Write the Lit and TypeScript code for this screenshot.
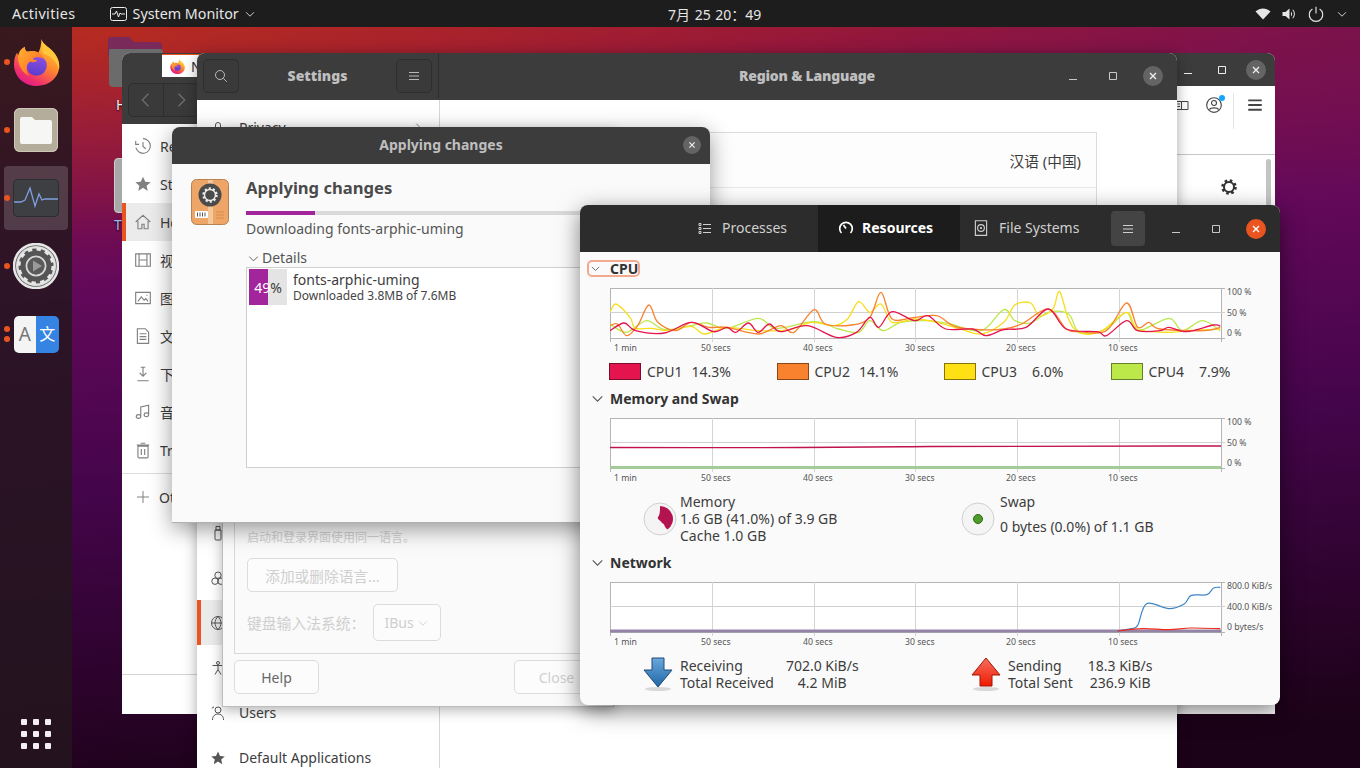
import { LitElement, html, svg, css } from "lit";
import { customElement } from "lit/decorators.js";

// points are read off the reference crop, x in 2.24x and y in 3x
type Pt = [number, number];
const CPU3: Pt[] = [[68,320],[80,295],[100,315],[115,340],[125,368],[160,368],[200,375],[250,362],[280,385],[330,365],[400,375],[470,372],[520,350],[570,360],[600,340],[625,288],[650,320],[675,295],[700,350],[750,340],[800,350],[850,368],[900,385],[950,350],[975,298],[1010,292],[1030,330],[1060,310],[1075,258],[1095,340],[1120,382],[1170,375],[1225,320],[1250,370],[1320,380],[1360,375],[1435,370]];
const CPU2: Pt[] = [[68,360],[85,355],[105,390],[130,360],[155,298],[175,350],[215,375],[250,350],[290,365],[330,365],[400,385],[450,360],[480,380],[525,312],[550,355],[610,358],[650,335],[675,260],[700,340],[750,335],[800,330],[840,362],[900,372],[950,370],[990,355],[1050,310],[1090,370],[1120,378],[1180,375],[1225,292],[1250,365],[1275,350],[1300,370],[1400,375],[1435,365]];
const CPU1: Pt[] = [[68,375],[100,352],[125,375],[190,382],[250,350],[300,378],[330,365],[350,380],[378,352],[400,380],[425,355],[450,378],[510,360],[575,395],[620,380],[650,335],[670,365],[700,318],[750,345],[780,330],[820,370],[880,370],[910,390],[950,372],[1000,365],[1050,310],[1090,370],[1160,378],[1180,390],[1225,345],[1250,375],[1300,375],[1320,365],[1360,378],[1420,358],[1435,362]];
const CPU4: Pt[] = [[68,355],[105,380],[150,345],[190,372],[250,360],[285,352],[330,368],[400,338],[440,368],[525,348],[580,370],[625,380],[650,345],[680,375],[720,350],[780,345],[830,355],[900,375],[950,312],[975,345],[1010,352],[1050,320],[1095,325],[1120,380],[1180,370],[1225,320],[1250,375],[1320,338],[1350,375],[1395,345],[1435,375]];
const NET_IN: Pt[] = [[1205,257],[1235,250],[1250,240],[1270,175],[1320,190],[1355,175],[1370,150],[1405,148],[1420,128],[1435,126]];
const NET_OUT: Pt[] = [[1205,257],[1260,250],[1320,253],[1370,248],[1435,250]];

function smooth(pts: Pt[], top: number) {
  const p = pts.map(([x, y]) => [(x - 68) / 2.24, (y - top) / 3]);
  let d = `M${p[0][0]} ${p[0][1]}`;
  for (let i = 0; i < p.length - 1; i++) {
    const a = p[Math.max(i - 1, 0)], b = p[i], c = p[i + 1], e = p[Math.min(i + 2, p.length - 1)];
    d += ` C${b[0] + (c[0] - a[0]) / 6} ${b[1] + (c[1] - a[1]) / 6} ${c[0] - (e[0] - b[0]) / 6} ${c[1] - (e[1] - b[1]) / 6} ${c[0]} ${c[1]}`;
  }
  return d;
}

const TIMES: [string, number][] = [["1 min", 4], ["50 secs", 91], ["40 secs", 193], ["30 secs", 295], ["20 secs", 396], ["10 secs", 498]];

function chart(labels: string[], series: unknown) {
  return html`<svg class="chart" width="670" height="70" viewBox="0 0 670 70">
    <rect x="0.5" y="0.5" width="611" height="50" fill="#fff" stroke="#b4b4b4"/>
    ${[102.5, 204.5, 305.5, 407.5, 509.5].map((x) => svg`<line x1=${x} x2=${x} y1="0" y2="54" stroke="#d4d4d4"/>`)}
    <line x1="0" x2="615" y1="24.5" y2="24.5" stroke="#d0d0d0"/>
    <line x1="0.5" x2="0.5" y1="50" y2="54" stroke="#b4b4b4"/>
    <line x1="611.5" x2="611.5" y1="50" y2="54" stroke="#b4b4b4"/>
    <line x1="611" x2="615" y1="0.5" y2="0.5" stroke="#b4b4b4"/>
    <line x1="611" x2="615" y1="50.5" y2="50.5" stroke="#b4b4b4"/>
    ${series}
    ${TIMES.map(([t, x]) => svg`<text class="axis" x=${x} y="63">${t}</text>`)}
    ${labels.map((t, i) => svg`<text class="axis" x="617" y=${7 + i * 20.5}>${t}</text>`)}
  </svg>`;
}

const stroke = (d: string, size = 16, vb = 16) => html`<svg class="ic" width=${size} height=${size} viewBox="0 0 ${vb} ${vb}" fill="none" stroke="currentColor" stroke-width="1"><path d=${d}/></svg>`;
const fill = (d: string, size = 16, vb = 16) => html`<svg class="ic" width=${size} height=${size} viewBox="0 0 ${vb} ${vb}" fill="currentColor"><path d=${d}/></svg>`;

const CHEV = "M3.5 6l4.5 4.5L12.5 6";
const MENU = "M3 4.5h10M3 8h10M3 11.5h10";
const STAR = "M8 1.5l2 4.4 4.8.5-3.6 3.2 1 4.7L8 11.4l-4.2 2.9 1-4.7L1.2 6.4 6 5.9z";

function controls(close = "dim") {
  return html`<div class="controls">
    <span class="ctl">${stroke("M4 11.5h8", 16)}</span>
    <span class="ctl">${stroke("M4.5 4.5h7v7h-7z", 16)}</span>
    <span class="ctl"><span class="close ${close}">${stroke("M5 5l6 6M11 5l-6 6", 16)}</span></span>
  </div>`;
}

function firefoxIcon(size: number) {
  return html`<svg width=${size} height=${size} viewBox="0 0 48 48">
    <defs>
      <linearGradient id="ff1" x1="0.8" y1="0" x2="0.2" y2="1"><stop offset="0" stop-color="#ffd43b"/><stop offset="0.45" stop-color="#ff8a2d"/><stop offset="0.8" stop-color="#f0306a"/><stop offset="1" stop-color="#d9169a"/></linearGradient>
      <linearGradient id="ff2" x1="0.6" y1="0" x2="0.4" y2="1"><stop offset="0" stop-color="#8f50e8"/><stop offset="1" stop-color="#5b3bc8"/></linearGradient>
      <linearGradient id="ff3" x1="0" y1="0" x2="1" y2="1"><stop offset="0" stop-color="#ffb52e"/><stop offset="1" stop-color="#ff5a28"/></linearGradient>
    </defs>
    <path fill="url(#ff1)" d="M29 0c1 5 6 7 11 12 6 6 8 13 7 19-2 10-11 17-23 17C11 48 1 38 1 26c0-5 1-9 3-12l2 4c1-5 3-8 6-10 0 3 1 5 3 5 4-1 8 0 11 1 2-4 3-9 3-14z"/>
    <circle cx="24" cy="27" r="10.5" fill="url(#ff2)"/>
    <path fill="url(#ff3)" d="M5 18c1-5 3-8 7-10 0 3 1 5 3 5 7-2 14 0 17 8-2-2-5-3-9-2-2 0-3 1-2 2l4 1c-2 2-5 2-7 1-3 1-4 4-4 7 0 3 1 6 3 8-7-3-12-11-12-20z"/>
    <path fill="#ffc83a" d="M29 0c1 5 6 7 11 12 6 6 8 13 7 19-2-7-6-12-13-15-3-1-4-2-4-4 0-4 0-8-1-12z"/>
  </svg>`;
}

const gearDash = (r: number, w: number, color: string, n = 12) => {
  const c = 2 * Math.PI * r;
  return svg`<circle cx="0" cy="0" r=${r} fill="none" stroke=${color} stroke-width=${w} stroke-dasharray="${c / n / 2} ${c / n / 2}"/>`;
};

function settingsIcon() {
  return html`<svg width="46" height="46" viewBox="-23 -23 46 46">
    <circle r="22" fill="#5a5a5a" stroke="#e6e6e6" stroke-width="2.5"/>
    <circle r="20" fill="#e8e8e8" opacity=".95"/>
    <circle r="17.5" fill="#555"/>
    ${gearDash(17, 3, "#e8e8e8")}
    <circle r="9.5" fill="none" stroke="#d6d6d6" stroke-width="2"/>
    <circle r="8.5" fill="#5a5a5a"/>
    <path fill="#9a9a9a" d="M-3-5.5L6 0l-9 5.5z"/>
  </svg>`;
}

function packageIcon() {
  return html`<svg width="38" height="46" viewBox="0 0 38 46">
    <rect x="0.5" y="0.5" width="37" height="45" rx="5" fill="#eda568" stroke="#b98252"/>
    <rect x="17" y="1" width="5" height="44" fill="#f4c79a"/>
    <circle cx="19" cy="16" r="11.5" fill="#4b4b4b"/>
    <g transform="translate(19 16)">${gearDash(6.5, 2.4, "#ededed", 10)}<circle r="5.5" fill="none" stroke="#ededed" stroke-width="1.4"/></g>
    <rect x="4" y="32" width="13" height="7" rx="1" fill="#fff"/>
    <path d="M6.5 33.5v4M9 33.5v4M11.5 33.5v4M14 33.5v4" stroke="#555" stroke-width="1"/>
    <path d="M25 33h8M25 36h8M25 39h8" stroke="#d68d4e" stroke-width="1"/>
  </svg>`;
}

function arrow(up: boolean) {
  const id = up ? "arrUp" : "arrDown";
  const pts = up ? "15,2 29,19 21,19 21,30 9,30 9,19 1,19" : "9,2 21,2 21,14 29,14 15,31 1,14 9,14";
  return html`<svg width="30" height="36" viewBox="0 0 30 36">
    <defs><linearGradient id=${id} x1="0" y1="0" x2="0" y2="1">
      <stop offset="0" stop-color=${up ? "#f77060" : "#6aa8dc"}/><stop offset="1" stop-color=${up ? "#ee1a00" : "#1f66a6"}/>
    </linearGradient></defs>
    <ellipse cx="15" cy="33" rx="13" ry="2" fill="#d8d8d8"/>
    <polygon points=${pts} fill="url(#${id})" stroke=${up ? "#a51200" : "#204a78"}/>
  </svg>`;
}

const SIDE = ["Privacy", "Online Accounts", "Sharing", "Sound", "Power", "Displays", "Mouse & Touchpad", "Keyboard Shortcuts", "Printers", "Removable Media", "Color", "Region & Language", "Universal Access", "Users", "Default Applications"];
const SIDE_ICON: Record<string, string> = {
  Privacy: "M4 8h8v6H4zM5.5 8V5a2.5 2.5 0 015 0v3",
  "Removable Media": "M5 5h6v9a1 1 0 01-1 1H6a1 1 0 01-1-1zM6 1.5h4V5H6z",
  Color: "M8 2a3.2 3.2 0 100 6.4A3.2 3.2 0 008 2zM5 8a3.2 3.2 0 100 6.4A3.2 3.2 0 005 8zM11 8a3.2 3.2 0 100 6.4A3.2 3.2 0 0011 8z",
  "Region & Language": "M8 1.5a6.5 6.5 0 100 13 6.5 6.5 0 000-13zM1.5 8h13M8 1.5c-4 4-4 9 0 13M8 1.5c4 4 4 9 0 13",
  "Universal Access": "M8 1.5a1.5 1.5 0 100 3 1.5 1.5 0 000-3zM2.5 5.5h11M8 5.5v4M8 9.5l-3 5M8 9.5l3 5",
  Users: "M8 2a3 3 0 100 6 3 3 0 000-6zM2.5 15c0-4 2.5-6 5.5-6s5.5 2 5.5 6M2 3.5a2 2 0 012-1.5",
};

const FILES: [string, string][] = [
  ["Recent", "M8 1.5a6.5 6.5 0 11-6.3 8M8 4.5V8.5l2.5 2M1.5 3.5v3h3"],
  ["Starred", ""],
  ["Home", "M1.5 8L8 2l6.5 6M3.5 7v7h3.5v-4h2v4h3.5V7"],
  ["视频", "M1.5 2.5h13v11h-13zM4.5 2.5v11M11.5 2.5v11M4.5 8h7"],
  ["图片", "M1.5 3h13v10h-13zM3.5 11l3-4 2.5 3 1.5-1.5 2 2.5M11 5.5h1"],
  ["文档", "M3 1.5h7l3 3v10H3zM5 6h6M5 8.5h6M5 11h6"],
  ["下载", "M8 2v8M5 7l3 3 3-3M6 2h4M3 14h10"],
  ["音乐", "M6 12V3.5l7-1.5v8.5M6 12a2 1.7 0 11-4 0 2 1.7 0 014 0zM13 10.5a2 1.7 0 11-4 0 2 1.7 0 014 0z"],
  ["Trash", "M3.5 4.5h9V14a1 1 0 01-1 1h-7a1 1 0 01-1-1zM2.5 3.5h11M6 2h4M6.5 7v5.5M9.5 7v5.5"],
];

@customElement("app-root")
export class AppRoot extends LitElement {
  static styles = css`
    :host {
      display: block;
      position: relative;
      width: 1360px;
      height: 768px;
      overflow: hidden;
      font-family: "Noto Sans", "Noto Sans CJK SC", sans-serif;
      font-size: 14px;
      color: #3d3d3d;
      background:
        radial-gradient(560px 220px at 1360px 40px, rgba(100, 15, 90, 0.45), transparent),
        radial-gradient(700px 220px at 90px 20px, rgba(200, 60, 20, 0.45), transparent),
        linear-gradient(176deg, #a81e2a 4%, #8f1540 14%, #62085a 34%, #44054a 58%, #1c0218 94%);
    }
    .ic { display: block; flex: none; }

    /* top bar */
    .top {
      position: relative;
      z-index: 20;
      height: 27px;
      display: flex;
      align-items: center;
      background: #1d1d1d;
      color: #e6e6e6;
      font-size: 14.3px;
    }
    .top-left { flex: 0 0 668px; display: flex; align-items: center; padding-left: 12px; box-sizing: border-box; }
    .activities { letter-spacing: 0.4px; }
    .app-menu { margin-left: 34px; display: flex; align-items: center; gap: 6px; }
    .app-menu .ic { margin-left: -2px; }
    .clock { font-size: 14px; word-spacing: 1px; }
    .tray { margin-left: auto; display: flex; align-items: center; padding-right: 11px; gap: 10px; }

    /* dock */
    .dock {
      position: absolute;
      z-index: 19;
      left: 0;
      top: 27px;
      bottom: 0;
      width: 72px;
      background: rgba(36, 22, 30, 0.86);
      display: flex;
      flex-direction: column;
      align-items: center;
      gap: 4px;
      padding-top: 3px;
      padding-bottom: 19px;
      box-sizing: border-box;
    }
    .slot { position: relative; width: 64px; height: 64px; display: flex; align-items: center; justify-content: center; border-radius: 4px; }
    .slot.active { background: rgba(255, 255, 255, 0.17); }
    .dots { position: absolute; left: 0; top: 0; bottom: 0; display: flex; flex-direction: column; justify-content: center; gap: 4px; }
    .dots i { display: block; width: 6px; height: 6px; border-radius: 50%; background: #e95420; }
    .files-ic { width: 44px; height: 44px; border-radius: 6px; background: #b5ad9b; display: flex; align-items: center; justify-content: center; box-shadow: inset 0 0 0 1px #cfc8b8; }
    .lang-ic { width: 45px; height: 37px; border-radius: 5px; overflow: hidden; display: grid; grid-template-columns: 1fr 1fr; font-size: 19px; line-height: 37px; text-align: center; }
    .lang-ic span:first-child { background: #f4f4f4; color: #777; }
    .lang-ic span:last-child { background: #3584e4; color: #fff; font-size: 16px; }
    .apps { margin-top: auto; display: grid; grid-template-columns: repeat(3, 6px); gap: 6px; }
    .apps i { width: 6px; height: 6px; background: #f2eef2; border-radius: 1px; }

    /* desktop */
    .desk-icon { position: absolute; color: #eee; text-shadow: 0 1px 2px #000; }
    .desk-home { left: 108px; top: 37px; width: 56px; height: 52px; }
    .desk-home-label { left: 116px; top: 95px; }
    .desk-trash { left: 114px; top: 158px; width: 30px; height: 55px; border-radius: 4px; background: #a8a8a8; border: 1px solid #ccc; box-sizing: border-box; }
    .desk-trash-label { left: 114px; top: 215px; color: #9db8f0; }

    /* shared window bits */
    .win { position: absolute; background: #fafafa; display: flex; flex-direction: column; }
    .head { background: #3c3c3c; color: #bfbfbf; display: flex; align-items: center; flex: none; }
    .controls { display: flex; align-items: center; margin-left: auto; color: #c8c8c8; }
    .ctl { width: 40px; height: 34px; display: flex; align-items: center; justify-content: center; }
    .close { width: 20px; height: 20px; border-radius: 50%; display: flex; align-items: center; justify-content: center; }
    .close .ic { stroke-width: 1.4; }
    .close.dim { background: #646464; color: #eee; }
    .close.hot { background: #e95420; color: #fff; }
    .hbtn { width: 36px; height: 34px; box-sizing: border-box; border: 1px solid #2e2e2e; border-radius: 5px; background: #3a3a3a; display: flex; align-items: center; justify-content: center; color: #b8b8b8; }

    /* browser + file chooser behind everything */
    .ff { left: 122px; top: 53px; width: 1153px; height: 661px; background: #fff; border-radius: 8px 8px 0 0; }
    .ff .head { height: 33px; border-radius: 8px 8px 0 0; }
    .ff .controls { color: #eee; margin-right: 2px; }
    .ff .ctl { width: 34px; }
    .tab { margin-left: 40px; align-self: flex-start; margin-top: 1px; width: 120px; height: 23px; box-sizing: border-box; background: #fff; border-top: 1px solid #e95420; display: flex; align-items: center; padding-left: 8px; gap: 6px; color: #333; }
    .ff-body { flex: 1; display: flex; min-height: 0; }
    .ff-left { flex: 0 0 200px; display: flex; flex-direction: column; }
    .ff-nav { height: 38px; background: #3c3c3c; padding-left: 6px; flex: none; }
    .pair { display: flex; width: 71px; height: 34px; margin-top: -3px; border: 1px solid #2e2e2e; border-radius: 5px; background: #3a3a3a; color: #6f6f6f; box-sizing: border-box; }
    .pair span { flex: 1; display: flex; align-items: center; justify-content: center; }
    .pair span + span { border-left: 1px solid #2e2e2e; }
    .places { padding-top: 3px; }
    .place { height: 38px; display: flex; align-items: center; padding-left: 8px; gap: 8px; color: #808080; border-left: 4px solid transparent; }
    .place.sel { background: #ebebeb; border-left-color: #e95420; }
    .place span { color: #3d3d3d; }
    .place-sep { border-top: 1px solid #dedede; margin-top: 4px; padding-top: 4px; }
    .place-sep .place { padding-left: 9px; }
    .ff-foot { margin-top: auto; height: 39px; border-top: 1px solid #d4d4d4; }
    .ff-right { margin-left: auto; flex: 0 0 98px; position: relative; display: flex; flex-direction: column; }
    .ff-bar { height: 69px; border-bottom: 1px solid #c8c8c8; box-sizing: border-box; display: flex; padding: 7px 11px 0 0; color: #444; align-items: flex-start; justify-content: flex-end; gap: 10px; }
    .ff-tool { position: relative; height: 24px; display: flex; align-items: center; }
    .ff-tool.reader { margin-right: 5px; }
    .ff-tool.burger { margin-left: 2px; }
    .badge { position: absolute; right: -2px; top: 2px; width: 6px; height: 6px; border-radius: 50%; background: #12a7ff; }
    .ff-bar .vsep { width: 1px; height: 36px; background: #e4e4e4; }
    .ff-gear { display: flex; padding: 23px 0 0 46px; color: #333; }
    .scroll { position: absolute; right: 4px; top: 73px; width: 5px; height: 50px; border-radius: 3px; background: #c4c4c4; }

    /* settings */
    .settings { left: 197px; top: 53px; width: 980px; height: 715px; background: #fff; box-shadow: 0 2px 14px rgba(0, 0, 0, 0.35); border-radius: 8px 8px 0 0; }
    .settings .head { height: 47px; border-radius: 8px 8px 0 0; font-weight: 700; padding-bottom: 2px; box-sizing: border-box; }
    .settings .controls { margin-right: 4px; }
    .s-side-head { width: 242px; box-sizing: border-box; flex: none; height: 100%; display: flex; align-items: center; justify-content: space-between; padding: 0 6px; border-right: 1px solid #2e2e2e; }
    .s-title { flex: 1; display: flex; align-items: center; justify-content: center; height: 100%; position: relative; }
    .s-title b { padding-right: 2px; letter-spacing: -0.2px; }
    .s-title .controls { position: absolute; right: 0; top: 6px; }
    .s-body { flex: 1; display: flex; min-height: 0; }
    .s-side { width: 243px; flex: none; box-sizing: border-box; border-right: 1px solid #d6d6d6; padding-top: 5px; overflow: hidden; }
    .s-row { height: 45px; box-sizing: border-box; padding-left: 9px; display: flex; align-items: center; gap: 13px; border-left: 4px solid transparent; color: #555; }
    .s-row.sel { background: #ebebeb; border-left-color: #e95420; }
    .s-row span { color: #3d3d3d; }
    .s-row .more { margin-left: auto; margin-right: 14px; color: #777; }
    .s-main { flex: 1; padding: 32px 3px 0 0; display: flex; justify-content: center; }
    .s-box { width: 580px; box-sizing: border-box; height: fit-content; border: 1px solid #dcdcdc; background: #fdfdfd; }
    .s-box-row { height: 54px; padding: 0 15px; display: flex; align-items: center; justify-content: space-between; color: #3d3d3d; font-size: 14.7px; }
    .s-box-row + .s-box-row { border-top: 1px solid #e8e8e8; }

    /* greyed language dialog */
    .lang { left: 222px; top: 130px; width: 392px; height: 577px; border: 1px solid #bdbdbd; box-sizing: border-box; box-shadow: 0 3px 12px rgba(0, 0, 0, 0.3); padding: 0 0 0 11px; }
    .lang-panel { flex: 1; border-left: 1px solid #d8d8d8; border-bottom: 1px solid #d8d8d8; padding: 0 0 12px 12px; display: flex; flex-direction: column; justify-content: flex-end; align-items: flex-start; color: #cfcfcf; }
    .lang-note { font-size: 12px; line-height: 16px; margin-bottom: 12px; }
    .fbtn { border: 1px solid #dcdcdc; border-radius: 5px; box-sizing: border-box; display: flex; align-items: center; justify-content: center; background: #fcfcfc; }
    .add { width: 151px; height: 34px; margin-bottom: 12px; font-size: 14.7px; }
    .lang-kb { display: flex; align-items: center; gap: 15px; }
    .lang-kb > span:first-child { font-size: 14.8px; width: 111px; white-space: nowrap; }
    .ibus { width: 68px; height: 37px; gap: 2px; }
    .lang-foot { display: flex; justify-content: space-between; padding: 6px 14px 12px 0; flex: none; }
    .lang-foot .fbtn { height: 34px; width: 85px; }
    .help { color: #666; }
    .shut { color: #d0d0d0; }

    /* apply dialog */
    .apply { left: 172px; top: 127px; width: 538px; height: 396px; border-radius: 8px 8px 0 0; box-shadow: 0 6px 22px rgba(0, 0, 0, 0.4); border-bottom: 1px solid #b0b0b0; box-sizing: border-box; }
    .apply .head { height: 37px; border-radius: 8px 8px 0 0; font-weight: 700; position: relative; justify-content: center; padding-bottom: 2px; box-sizing: border-box; }
    .apply .x { position: absolute; right: 9px; top: 9px; width: 18px; height: 18px; }
    .ap-body { flex: 1; display: flex; padding: 15px 20px 0 19px; gap: 17px; }
    .ap-col { flex: 1; display: flex; flex-direction: column; }
    .ap-title { font-size: 16.6px; line-height: 20px; font-weight: 700; color: #4a4a4a; margin-top: -1px; }
    .ap-bar { margin-top: 13px; height: 4px; background: #dadada; }
    .ap-bar i { display: block; height: 100%; background: #a3259b; }
    .ap-status { margin-top: 4px; line-height: 20px; color: #555; }
    .ap-det { margin-top: 10px; height: 18px; line-height: 18px; display: flex; align-items: center; gap: 1px; color: #555; }
    .ap-list { height: 201px; border: 1px solid #cfcfcf; box-sizing: border-box; background: #fff; padding: 1px 2px; }
    .ap-item { display: flex; gap: 6px; }
    .ap-pct { width: 38px; height: 36px; background: #e4e4e4; position: relative; display: flex; align-items: center; justify-content: center; color: #3d3d3d; flex: none; }
    .ap-pct i { position: absolute; left: 0; top: 0; bottom: 0; background: #a3259b; }
    .ap-pct b { position: relative; font-weight: 400; }
    .ap-pct em { font-style: normal; color: #fff; }
    .ap-name { line-height: 18px; margin-top: 2px; color: #3d3d3d; }
    .ap-sub { font-size: 12px; line-height: 14px; color: #444; }

    /* system monitor */
    .mon { left: 580px; top: 205px; width: 700px; height: 500px; border-radius: 8px; box-shadow: 0 6px 22px rgba(0, 0, 0, 0.5); z-index: 5; }
    .mon > .head { height: 47px; background: #2c2c2c; border-radius: 8px 8px 0 0; position: relative; color: #d0d0d0; }
    .tabs { display: flex; height: 100%; margin-left: 107px; }
    .mtab { display: flex; align-items: center; gap: 9px; padding: 0 31px 2px 10px; height: 100%; box-sizing: border-box; }
    .mtab.on { background: #1c1c1c; color: #fff; font-weight: 700; padding: 0 27px 2px 20px; gap: 8px; }
    .mtab.on .ic { stroke-width: 1.7; }
    .mtab.t3 { padding: 0 32px 2px 12px; }
    .menu-b { width: 34px; height: 35px; background: #444; border-radius: 4px; display: flex; align-items: center; justify-content: center; }
    .mon .ctl { width: 40px; }
    .mon .controls { margin-left: 11px; margin-right: 3px; }
    .mbody { padding: 8px 0 0 30px; position: relative; flex: 1; }
    .sec { height: 17px; display: flex; align-items: center; font-weight: 700; line-height: 17px; margin-left: -21px; gap: 4px; color: #333; margin-bottom: 11px; width: fit-content; }
    .sec .ic { color: #555; }
    .sec.focus { outline: 2px solid #f3a98f; border-radius: 3px; height: 13px; margin-top: 2px; margin-bottom: 13px; gap: 8px; }
    .chart { display: block; }
    .axis { font-size: 8.7px; fill: #555; font-family: "Noto Sans", sans-serif; }
    .legend { display: grid; grid-template-columns: 167.5px 167px 167px auto; margin: 5px 0 10px -1px; height: 17px; }
    .lg { display: flex; align-items: center; line-height: 17px; color: #3d3d3d; }
    .sw { width: 32px; height: 17px; box-sizing: border-box; border: 1px solid; margin-right: 6px; }
    .lg b { font-weight: 400; margin-left: 9px; }
    .lg .wide { margin-left: 15px; }
    .info { display: grid; grid-template-columns: 318px auto; padding-left: 32px; line-height: 17px; margin-top: 5px; color: #3d3d3d; }
    .info.net { margin-top: 4px; padding-left: 33px; }
    .mem-cell { display: flex; gap: 2px; align-items: center; }
    .swap-txt { align-self: flex-start; margin-left: 2px; }
    .swap-txt div + div { margin-top: 8px; }
    .gap-net { height: 10px; }
    .net-cell { display: flex; align-items: center; gap: 7px; }
    .net-cell.sent { margin-left: 10px; }
    .net-tb { display: grid; grid-template-columns: auto auto; column-gap: 12px; }
    .sent .net-tb { column-gap: 15px; }
    .net-tb .v { text-align: center; }
  `;

  render() {
    return html`
      ${this.topBar()}
      ${this.dock()}
      ${this.desktop()}
      ${this.browser()}
      ${this.settings()}
      ${this.langDialog()}
      ${this.applyDialog()}
      ${this.monitor()}
    `;
  }

  topBar() {
    return html`<div class="top">
      <div class="top-left">
        <span class="activities">Activities</span>
        <span class="app-menu">
          <svg width="17" height="14" viewBox="0 0 17 14" fill="none" stroke="#eee"><rect x="0.5" y="0.5" width="16" height="13" rx="2"/><path d="M2 7h3l1.5-3 2 6 1.5-4 1 1h4"/></svg>
          <span>System Monitor</span>
          ${stroke(CHEV, 14)}
        </span>
      </div>
      <span class="clock">7月 25  20：49</span>
      <div class="tray">
        ${fill("M8 13.5L.5 5.5C5 1.5 11 1.5 15.5 5.5z", 16)}
        ${fill("M1.5 6h3L8.5 2.5v11L4.5 10h-3zM10 5.5c1.5 1.5 1.5 3.5 0 5zM12 3.5c2.5 2.5 2.5 6.5 0 9l-.6-.6c2-2 2-5.8 0-7.8z", 16)}
        ${stroke("M8 1.5v6M4.8 3.5a6 6 0 106.4 0", 18)}
        ${stroke(CHEV, 14)}
      </div>
    </div>`;
  }

  dock() {
    const dots = (n: number) => html`<div class="dots">${Array.from({ length: n }, () => html`<i></i>`)}</div>`;
    return html`<div class="dock">
      <div class="slot">${dots(1)}${firefoxIcon(47)}</div>
      <div class="slot">${dots(1)}
        <div class="files-ic"><svg width="32" height="27" viewBox="0 0 32 27"><path fill="#f6f6f4" d="M2 0h10l3 3h15a2 2 0 012 2v20a2 2 0 01-2 2H2a2 2 0 01-2-2V2a2 2 0 012-2z"/></svg></div>
      </div>
      <div class="slot active">${dots(1)}
        <svg width="46" height="38" viewBox="0 0 46 38"><rect x="0.5" y="0.5" width="45" height="37" rx="4" fill="#3d3f42" stroke="#2c2d2f"/><path d="M1 23h7l4-2 5-12 5 18 4-12 3 6 3-1h13" fill="none" stroke="#7f9fe0" stroke-width="1.3"/></svg>
      </div>
      <div class="slot">${dots(1)}${settingsIcon()}</div>
      <div class="slot">${dots(2)}<div class="lang-ic"><span>A</span><span>文</span></div></div>
      <div class="apps">${Array.from({ length: 9 }, () => html`<i></i>`)}</div>
    </div>`;
  }

  desktop() {
    return html`
      <svg class="desk-icon desk-home" viewBox="0 0 56 52">
        <path fill="#7a2a5a" d="M3 0h18l5 5h24a4 4 0 014 4v10H0V3a3 3 0 013-3z"/>
        <path fill="#6b6b6b" d="M2 12h50a3 3 0 013 3v31a4 4 0 01-4 4H5a4 4 0 01-4-4V13z"/>
      </svg>
      <span class="desk-icon desk-home-label">H</span>
      <div class="desk-icon desk-trash"></div>
      <span class="desk-icon desk-trash-label">T</span>
    `;
  }

  browser() {
    return html`<div class="win ff">
      <div class="head">
        <div class="tab">${firefoxIcon(15)}<span>New Tab</span></div>
        ${controls()}
      </div>
      <div class="ff-body">
        <div class="ff-left">
          <div class="ff-nav"><div class="pair"><span>${stroke("M10 3L5 8l5 5", 20)}</span><span>${stroke("M6 3l5 5-5 5", 20)}</span></div></div>
          <div class="places">
            ${FILES.map(([name, d]) => html`<div class="place ${name === "Home" ? "sel" : ""}">
              ${d ? stroke(d, 18) : fill(STAR, 18)}<span>${name}</span>
            </div>`)}
            <div class="place-sep"><div class="place">${stroke("M8 2v12M2 8h12", 16)}<span>Other Locations</span></div></div>
          </div>
          <div class="ff-foot"></div>
        </div>
        <div class="ff-right">
          <div class="ff-bar">
            <span class="ff-tool reader">${stroke("M2 4.5h5.5v8H2zM7.5 4.5h6.5v8H7.5zM3.5 7h2.5M3.5 9.5h2.5", 16)}</span>
            <span class="ff-tool">${stroke("M8 1.5a6.5 6.5 0 100 13 6.5 6.5 0 000-13zM8 4a2.2 2.2 0 100 4.4A2.2 2.2 0 008 4zM4 12c1-2 7-2 8 0", 18)}<i class="badge"></i></span>
            <span class="vsep"></span>
            <span class="ff-tool burger">${fill("M2 3h12v1.6H2zM2 7.2h12v1.6H2zM2 11.4h12V13H2z", 18)}</span>
          </div>
          <div class="ff-gear">
            <svg width="18" height="18" viewBox="-9 -9 18 18"><circle r="5" fill="none" stroke="#333" stroke-width="2"/>${gearDash(6.5, 2.6, "#333", 8)}</svg>
          </div>
          <div class="scroll"></div>
        </div>
      </div>
    </div>`;
  }

  settings() {
    return html`<div class="win settings">
      <div class="head">
        <div class="s-side-head">
          <span class="hbtn">${stroke("M7 2.5a4.5 4.5 0 100 9 4.5 4.5 0 000-9zM10.3 10.3l3.5 3.5", 16)}</span>
          <b>Settings</b>
          <span class="hbtn">${stroke(MENU, 16)}</span>
        </div>
        <div class="s-title"><b>Region &amp; Language</b>${controls()}</div>
      </div>
      <div class="s-body">
        <div class="s-side">
          ${SIDE.map((name) => html`<div class="s-row ${name === "Region & Language" ? "sel" : ""}">
            ${name === "Default Applications" ? fill(STAR, 16) : stroke(SIDE_ICON[name] ?? "M8 2a6 6 0 100 12A6 6 0 008 2z", 16)}
            <span>${name}</span>
            ${name === "Privacy" ? html`<i class="more">${stroke("M6 3l5 5-5 5", 14)}</i>` : ""}
          </div>`)}
        </div>
        <div class="s-main">
          <div class="s-box">
            <div class="s-box-row"><span>语言</span><span>汉语 (中国)</span></div>
            <div class="s-box-row"><span>格式</span><span>中国</span></div>
          </div>
        </div>
      </div>
    </div>`;
  }

  langDialog() {
    return html`<div class="win lang">
      <div class="lang-panel">
        <div class="lang-note">启动和登录界面使用同一语言。</div>
        <div class="fbtn add">添加或删除语言...</div>
        <div class="lang-kb">
          <span>键盘输入法系统：</span>
          <span class="fbtn ibus">IBus ${stroke(CHEV, 14)}</span>
        </div>
      </div>
      <div class="lang-foot">
        <span class="fbtn help">Help</span>
        <span class="fbtn shut">Close</span>
      </div>
    </div>`;
  }

  applyDialog() {
    return html`<div class="win apply">
      <div class="head">
        <span>Applying changes</span>
        <span class="close dim x">${stroke("M5 5l6 6M11 5l-6 6", 14)}</span>
      </div>
      <div class="ap-body">
        ${packageIcon()}
        <div class="ap-col">
          <div class="ap-title">Applying changes</div>
          <div class="ap-bar"><i style="width: ${(69 / 444) * 100}%"></i></div>
          <div class="ap-status">Downloading fonts-arphic-uming</div>
          <div class="ap-det">${stroke(CHEV, 15)}<span>Details</span></div>
          <div class="ap-list">
            <div class="ap-item">
              <div class="ap-pct"><i style="width: ${49 * 0.38}px"></i><b><em>49</em>%</b></div>
              <div>
                <div class="ap-name">fonts-arphic-uming</div>
                <div class="ap-sub">Downloaded 3.8MB of 7.6MB</div>
              </div>
            </div>
          </div>
        </div>
      </div>
    </div>`;
  }

  monitor() {
    const cpuLines = svg`
      <g fill="none" stroke-width="1.3">
        <path d=${smooth(CPU4, 247)} stroke="#bce84a"/>
        <path d=${smooth(CPU3, 247)} stroke="#f7de1c"/>
        <path d=${smooth(CPU2, 247)} stroke="#f8822e"/>
        <path d=${smooth(CPU1, 247)} stroke="#e4144f"/>
      </g>`;
    const memLines = svg`
      <path d="M0 29.5C200 30 260 29 320 28.5S500 28 611 28" fill="none" stroke="#c0124e" stroke-width="1.3"/>
      <rect x="0" y="48" width="611" height="3" fill="#a4cc9a"/>`;
    const netLines = svg`
      <rect x="0" y="47.5" width="611" height="3" fill="#9485a8"/>
      <g fill="none" stroke-width="1.2">
        <path d=${smooth(NET_IN, 110)} stroke="#3d86c6"/>
        <path d=${smooth(NET_OUT, 110)} stroke="#ee2a1c"/>
      </g>`;
    const legend: [string, string, string, string, boolean][] = [
      ["CPU1", "14.3%", "#e4144f", "#7c0c2c", false],
      ["CPU2", "14.1%", "#f8822e", "#8a4818", false],
      ["CPU3", "6.0%", "#ffe014", "#85740c", true],
      ["CPU4", "7.9%", "#bce84a", "#66802a", true],
    ];
    return html`<div class="win mon">
      <div class="head">
        <div class="tabs">
          <div class="mtab">${stroke("M2 3.5h2v2H2zM2 7.5h2v2H2zM2 11.5h2v2H2zM6 4.5h8M6 8.5h8M6 12.5h8", 16)}<span>Processes</span></div>
          <div class="mtab on">${stroke("M3.5 13a6.3 6.3 0 119 0M8 8.5L5.5 5", 16)}<span>Resources</span></div>
          <div class="mtab t3">${stroke("M3 1.5h10v13H3zM8 5a3 3 0 100 6 3 3 0 000-6zM8 7.5a.5.5 0 100 1 .5.5 0 000-1z", 18)}<span>File Systems</span></div>
        </div>
        <span class="menu-b">${stroke(MENU, 16)}</span>
        ${controls("hot")}
      </div>
      <div class="mbody">
        <div class="sec focus">${stroke(CHEV, 13)}<span>CPU</span></div>
        ${chart(["100 %", "50 %", "0 %"], cpuLines)}
        <div class="legend">
          ${legend.map(([n, v, bg, bd, wide]) => html`<div class="lg">
            <span class="sw" style="background: ${bg}; border-color: ${bd}"></span>
            <span>${n}</span><b class=${wide ? "wide" : ""}>${v}</b>
          </div>`)}
        </div>
        <div class="sec">${stroke(CHEV, 17)}<span>Memory and Swap</span></div>
        ${chart(["100 %", "50 %", "0 %"], memLines)}
        <div class="info">
          <div class="mem-cell">
            <svg width="36" height="36" viewBox="-18 -18 36 36">
              <circle r="16" fill="#f4f4f4" stroke="#d0d0d0"/>
              <path d="M0-13A13 13 0 017.5 10.6C4 8 5 5 2 4 1 1-3 1-2-2 0-4 0-8 0-13z" fill="#b3134f"/>
            </svg>
            <div>
              <div>Memory</div>
              <div>1.6 GB (41.0%) of 3.9 GB</div>
              <div>Cache 1.0 GB</div>
            </div>
          </div>
          <div class="mem-cell">
            <svg width="36" height="36" viewBox="-18 -18 36 36">
              <circle r="16" fill="#f4f4f4" stroke="#d0d0d0"/>
              <circle r="4.5" fill="#4e9a2a" stroke="#2d6e14"/>
            </svg>
            <div class="swap-txt">
              <div>Swap</div>
              <div>0 bytes (0.0%) of 1.1 GB</div>
            </div>
          </div>
        </div>
        <div class="gap-net"></div>
        <div class="sec">${stroke(CHEV, 17)}<span>Network</span></div>
        ${chart(["800.0 KiB/s", "400.0 KiB/s", "0 bytes/s"], netLines)}
        <div class="info net">
          <div class="net-cell">
            ${arrow(false)}
            <div class="net-tb">
              <span>Receiving</span><span class="v">702.0 KiB/s</span>
              <span>Total Received</span><span class="v">4.2 MiB</span>
            </div>
          </div>
          <div class="net-cell sent">
            ${arrow(true)}
            <div class="net-tb">
              <span>Sending</span><span class="v">18.3 KiB/s</span>
              <span>Total Sent</span><span class="v">236.9 KiB</span>
            </div>
          </div>
        </div>
      </div>
    </div>`;
  }
}
